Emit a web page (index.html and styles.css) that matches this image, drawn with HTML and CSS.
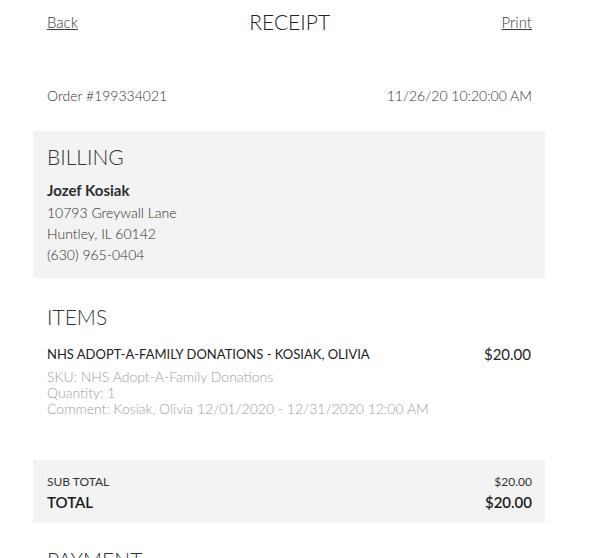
FILE: index.html
```html
<!DOCTYPE html>
<html>
<head>
<meta charset="utf-8">
<link rel="stylesheet" href="styles.css">
</head>
<body>
<div class="page">
  <header class="topbar">
    <a class="link" href="#">Back</a>
    <h1 class="title">RECEIPT</h1>
    <a class="link" href="#">Print</a>
  </header>

  <div class="order-row">
    <span>Order #199334021</span>
    <span>11/26/20 10:20:00 AM</span>
  </div>

  <section class="box billing">
    <h2 class="section-title">BILLING</h2>
    <div class="name">Jozef Kosiak</div>
    <div class="line">10793 Greywall Lane</div>
    <div class="line">Huntley, IL 60142</div>
    <div class="line">(630) 965-0404</div>
  </section>

  <section class="items">
    <h2 class="section-title">ITEMS</h2>
    <div class="item-row">
      <span class="item-name">NHS ADOPT-A-FAMILY DONATIONS - KOSIAK, OLIVIA</span>
      <span class="item-price">$20.00</span>
    </div>
    <div class="item-meta">
      <div>SKU: NHS Adopt-A-Family Donations</div>
      <div>Quantity: 1</div>
      <div>Comment: Kosiak, Olivia 12/01/2020 - 12/31/2020 12:00 AM</div>
    </div>
  </section>

  <section class="box totals">
    <div class="sub-row">
      <span>SUB TOTAL</span>
      <span>$20.00</span>
    </div>
    <div class="total-row">
      <span>TOTAL</span>
      <span>$20.00</span>
    </div>
  </section>

  <section class="payment">
    <h2 class="section-title">PAYMENT</h2>
  </section>
</div>
</body>
</html>
```

FILE: styles.css
```css
html, body {
  margin: 0;
  padding: 0;
  background: #ffffff;
}

body {
  font-family: "Lato", "Open Sans", sans-serif;
  color: #333333;
}

.page {
  width: 512px;
  margin-left: 33px;
}

.topbar {
  display: flex;
  justify-content: space-between;
  align-items: flex-start;
  padding: 10px 13px 0 14px;
  height: 50px;
}

.link {
  color: #3a3a3a;
  font-size: 15px;
  font-weight: 300;
  line-height: 24px;
  text-decoration: underline;
}

.title {
  margin: 0;
  font-weight: 300;
  font-size: 21px;
  line-height: 24px;
  color: #222222;
}

.order-row {
  display: flex;
  justify-content: space-between;
  padding: 27px 13px 0 14px;
  font-size: 14px;
  line-height: 18px;
  font-weight: 300;
  height: 44px;
}

.box {
  background: #f3f3f3;
}

.section-title {
  margin: 0;
  font-weight: 300;
  font-size: 21px;
  line-height: 26px;
  color: #333333;
}

.billing {
  padding: 13px 14px 13px 14px;
  height: 121px;
}

.name {
  margin-top: 8px;
  font-weight: 700;
  font-size: 15px;
  line-height: 24px;
  color: #2e2e2e;
}

.line {
  font-size: 14px;
  font-weight: 300;
  line-height: 21px;
  color: #2e2e2e;
}

.items {
  padding: 26px 13px 0 14px;
  height: 156px;
}

.item-row {
  display: flex;
  justify-content: space-between;
  margin-top: 14px;
  font-size: 13px;
  line-height: 20px;
  color: #222222;
}

.item-price {
  font-size: 15px;
  padding-right: 1px;
  font-weight: 400;
}

.item-meta {
  color: #a0a0a0;
  font-size: 14px;
  font-weight: 300;
  line-height: 16px;
  margin-top: 5px;
}

.totals {
  padding: 14px 13px 9px 14px;
  height: 40px;
}

.sub-row {
  display: flex;
  justify-content: space-between;
  font-size: 12px;
  line-height: 16px;
  color: #333333;
}

.total-row {
  display: flex;
  justify-content: space-between;
  font-size: 15px;
  font-weight: 600;
  line-height: 24px;
  color: #1a1a1a;
}

.payment {
  padding: 24px 14px 0 14px;
}
```
